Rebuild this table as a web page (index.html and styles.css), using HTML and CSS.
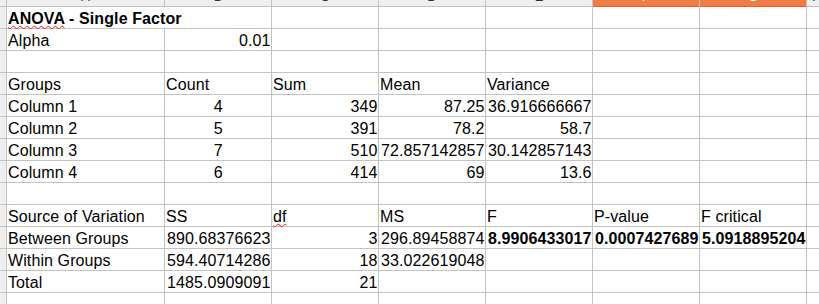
FILE: index.html
```html
<!DOCTYPE html>
<html>
<head>
<meta charset="utf-8">
<link rel="stylesheet" href="styles.css">
</head>
<body>
<div class="sheet">
  <div class="hd corner"></div>
  <div class="hd"><span class="lbl">A</span></div>
  <div class="hd"><span class="lbl">B</span></div>
  <div class="hd"><span class="lbl">C</span></div>
  <div class="hd"><span class="lbl">D</span></div>
  <div class="hd"><span class="lbl">E</span></div>
  <div class="hd sel"><span class="lbl">F</span></div>
  <div class="hd sel"><span class="lbl">G</span></div>
  <div class="hd"><span class="lbl">H</span></div>

  <div class="rh"></div>
  <div class="c b span2"><span class="spell">ANOVA</span> - Single Factor</div>
  <div class="c"></div><div class="c"></div><div class="c"></div><div class="c"></div><div class="c"></div><div class="c"></div>

  <div class="rh"></div>
  <div class="c">Alpha</div><div class="c r">0.01</div>
  <div class="c"></div><div class="c"></div><div class="c"></div><div class="c"></div><div class="c"></div><div class="c"></div>

  <div class="rh"></div>
  <div class="c"></div><div class="c"></div><div class="c"></div><div class="c"></div><div class="c"></div><div class="c"></div><div class="c"></div><div class="c"></div>

  <div class="rh"></div>
  <div class="c">Groups</div><div class="c">Count</div><div class="c">Sum</div><div class="c">Mean</div><div class="c">Variance</div>
  <div class="c"></div><div class="c"></div><div class="c"></div>

  <div class="rh"></div>
  <div class="c">Column 1</div><div class="c ctr">4</div><div class="c r">349</div><div class="c r">87.25</div><div class="c r">36.916666667</div>
  <div class="c"></div><div class="c"></div><div class="c"></div>

  <div class="rh"></div>
  <div class="c">Column 2</div><div class="c ctr">5</div><div class="c r">391</div><div class="c r">78.2</div><div class="c r">58.7</div>
  <div class="c"></div><div class="c"></div><div class="c"></div>

  <div class="rh"></div>
  <div class="c">Column 3</div><div class="c ctr">7</div><div class="c r">510</div><div class="c r">72.857142857</div><div class="c r">30.142857143</div>
  <div class="c"></div><div class="c"></div><div class="c"></div>

  <div class="rh"></div>
  <div class="c">Column 4</div><div class="c ctr">6</div><div class="c r">414</div><div class="c r">69</div><div class="c r">13.6</div>
  <div class="c"></div><div class="c"></div><div class="c"></div>

  <div class="rh"></div>
  <div class="c"></div><div class="c"></div><div class="c"></div><div class="c"></div><div class="c"></div><div class="c"></div><div class="c"></div><div class="c"></div>

  <div class="rh"></div>
  <div class="c">Source of Variation</div><div class="c">SS</div><div class="c"><span class="spell">df</span></div><div class="c">MS</div><div class="c">F</div><div class="c">P-value</div><div class="c">F critical</div>
  <div class="c"></div>

  <div class="rh"></div>
  <div class="c">Between Groups</div><div class="c r">890.68376623</div><div class="c r">3</div><div class="c r">296.89458874</div><div class="c r b">8.9906433017</div><div class="c r b">0.0007427689</div><div class="c r b">5.0918895204</div>
  <div class="c"></div>

  <div class="rh"></div>
  <div class="c">Within Groups</div><div class="c r">594.40714286</div><div class="c r">18</div><div class="c r">33.022619048</div>
  <div class="c"></div><div class="c"></div><div class="c"></div><div class="c"></div>

  <div class="rh"></div>
  <div class="c">Total</div><div class="c r">1485.0909091</div><div class="c r">21</div>
  <div class="c"></div><div class="c"></div><div class="c"></div><div class="c"></div><div class="c"></div>

  <div class="rh"></div>
  <div class="c"></div><div class="c"></div><div class="c"></div><div class="c"></div><div class="c"></div><div class="c"></div><div class="c"></div><div class="c"></div>
</div>
</body>
</html>
```
FILE: styles.css
```css
html, body {
  margin: 0;
  padding: 0;
  background: #ffffff;
  overflow: hidden;
}
body {
  width: 819px;
  height: 304px;
}
.sheet {
  display: grid;
  grid-template-columns: 6px 157px 106px 106px 106px 106px 106px 106px 20px;
  grid-template-rows: 6px repeat(14, 21px);
  gap: 1px;
  background: #c3c3c3;
  font-family: "Liberation Sans", Arial, sans-serif;
  font-size: 16px;
  color: #000;
  width: 840px;
}
.hd {
  background: #efefef;
  overflow: hidden;
  text-align: center;
  color: #333;
}
.hd.sel {
  background: #f07c4a;
  color: #fff;
  box-shadow: 0 1px 0 #d4653a;
}
.lbl {
  display: block;
  font-size: 13px;
  line-height: 14px;
  margin-top: -10px;
}
.rh {
  background: #efefef;
}
.c {
  background: #fff;
  white-space: nowrap;
  padding: 2px 0.5px 0 1px;
  line-height: 19px;
  letter-spacing: 0.1px;
}
.span2 {
  grid-column: span 2;
}
.r {
  text-align: right;
}
.ctr {
  text-align: center;
}
.b {
  font-weight: bold;
}
.spell {
  text-decoration-line: underline;
  text-decoration-style: wavy;
  text-decoration-color: #e8191b;
  text-decoration-thickness: 1px;
  text-underline-offset: 1px;
}
```
